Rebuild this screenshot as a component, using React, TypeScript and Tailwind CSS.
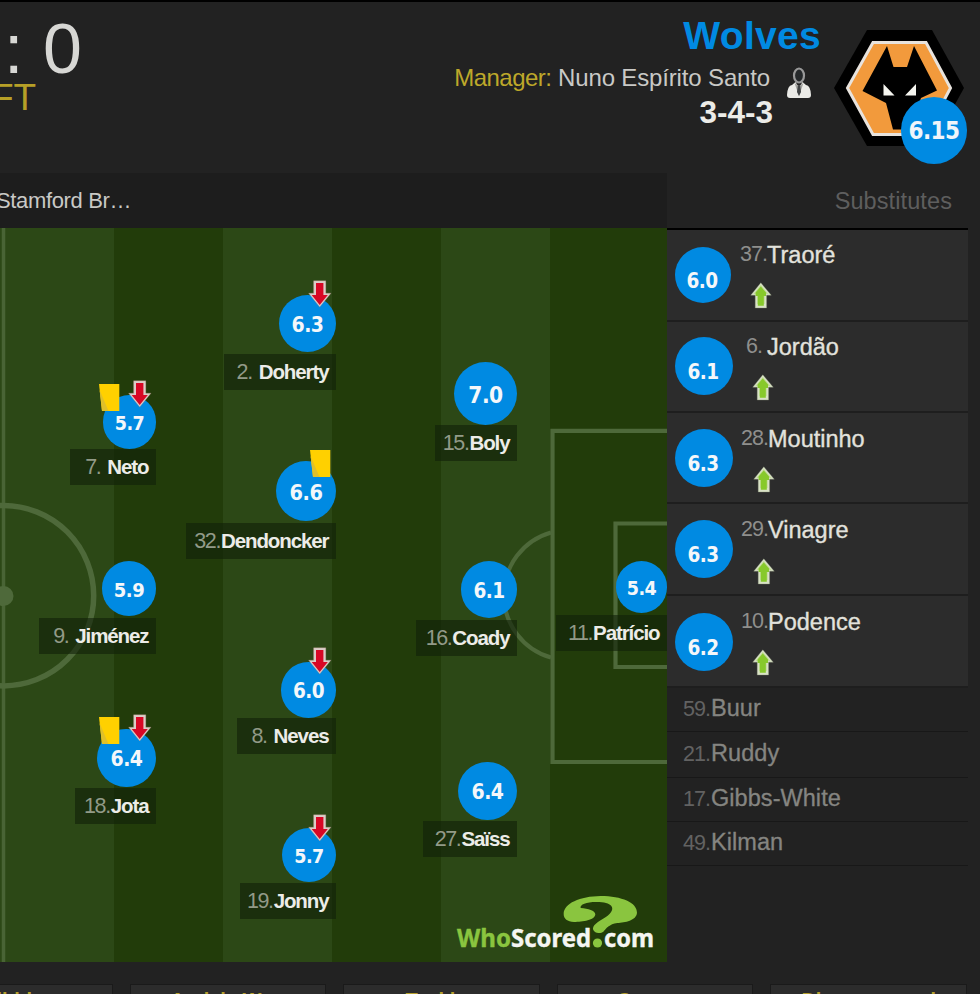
type Player = {
  number: string;
  name: string;
  rating: string;
  right: number;
  circleTop: number;
  circle: [number, number];
  labelTop: number;
  labelWidth: number;
  size: number;
  off?: [number, number];
  card?: [number, number];
};

const PITCH_TOP = 228;
const PITCH_WIDTH = 667;

const players: Player[] = [
  { number: "2.", name: "Doherty", rating: "6.3", right: 336, circleTop: 295, circle: [57, 57], labelTop: 354, labelWidth: 112, size: 21, off: [308, 280] },
  { number: "7.", name: "Neto", rating: "5.7", right: 156, circleTop: 395, circle: [53, 54], labelTop: 449, labelWidth: 86, size: 19.5, off: [128, 380], card: [98, 383] },
  { number: "32.", name: "Dendoncker", rating: "6.6", right: 336, circleTop: 461, circle: [60, 60], labelTop: 523, labelWidth: 150, size: 21.5, card: [309, 449] },
  { number: "9.", name: "Jiménez", rating: "5.9", right: 156, circleTop: 561, circle: [54, 55], labelTop: 618, labelWidth: 117, size: 20 },
  { number: "8.", name: "Neves", rating: "6.0", right: 336, circleTop: 662, circle: [55, 56], labelTop: 718, labelWidth: 99, size: 20.5, off: [308, 647] },
  { number: "18.", name: "Jota", rating: "6.4", right: 156, circleTop: 729, circle: [59, 58], labelTop: 788, labelWidth: 81, size: 21, off: [128, 714], card: [98, 716] },
  { number: "19.", name: "Jonny", rating: "5.7", right: 336, circleTop: 828, circle: [54, 54], labelTop: 883, labelWidth: 96, size: 19.5, off: [308, 814] },
  { number: "15.", name: "Boly", rating: "7.0", right: 517, circleTop: 362, circle: [63, 63], labelTop: 425, labelWidth: 82, size: 22.5 },
  { number: "16.", name: "Coady", rating: "6.1", right: 517, circleTop: 561, circle: [56, 57], labelTop: 620, labelWidth: 101, size: 20.5 },
  { number: "27.", name: "Saïss", rating: "6.4", right: 517, circleTop: 762, circle: [59, 58], labelTop: 821, labelWidth: 94, size: 21 },
  { number: "11.", name: "Patrício", rating: "5.4", right: 667, circleTop: 561, circle: [51, 52], labelTop: 615, labelWidth: 111, size: 19.5 },
];

const used = [
  { number: "37.", name: "Traoré", rating: "6.0", height: 92, size: 56, top: 17, arrow: 83, arrowGap: 12, numberEnd: 36, nameX: 36, nameTop: 8 },
  { number: "6.", name: "Jordão", rating: "6.1", height: 91, size: 58, top: 15, arrow: 85, arrowGap: 12, numberEnd: 29, nameX: 34, nameTop: 8 },
  { number: "28.", name: "Moutinho", rating: "6.3", height: 91, size: 58, top: 16, arrow: 86, arrowGap: 12, numberEnd: 35, nameX: 35, nameTop: 9 },
  { number: "29.", name: "Vinagre", rating: "6.3", height: 92, size: 58, top: 16, arrow: 86, arrowGap: 13, numberEnd: 35, nameX: 35, nameTop: 9 },
  { number: "10.", name: "Podence", rating: "6.2", height: 92, size: 58, top: 17, arrow: 85, arrowGap: 12, numberEnd: 35, nameX: 35, nameTop: 9 },
];

const unused = [
  { number: "59.", name: "Buur", height: 44 },
  { number: "21.", name: "Ruddy", height: 46 },
  { number: "17.", name: "Gibbs-White", height: 44 },
  { number: "49.", name: "Kilman", height: 44 },
];

function ArrowDown() {
  return (
    <svg width="24" height="28" viewBox="0 0 24 28">
      <path d="M5.6 .8H17.8V13.2H23L11.7 27L.6 13.2H5.6Z" fill="#dccdc8" stroke="#b08a80" strokeOpacity=".5" strokeWidth=".6" strokeLinejoin="round" />
      <path d="M8 3H15.4V15H19.8L11.7 24.9L3.7 15H8Z" fill="#d80725" />
    </svg>
  );
}

function ArrowUp() {
  return (
    <svg width="22" height="27" viewBox="0 0 22 27">
      <path d="M5.2 26V13.2H.7L10.8 .8L21.3 13.2H16.6V26Z" fill="#d9e2c6" stroke="#7d8770" strokeOpacity=".5" strokeWidth=".7" strokeLinejoin="round" />
      <path d="M3.5 12.1L10.8 3L18.4 12.1H14.6V22H7.2V12.1Z" fill="#bfdb90" />
      <path d="M7.8 23.8V14H5.6V10.4L10.8 4.6L16 10.4V14H13.8V23.8Z" fill="#87c92b" />
    </svg>
  );
}

function Card() {
  return (
    <svg width="22" height="29" viewBox="0 0 22 29">
      <path d="M1 1H21.3V28H4Z" fill="#ffd000" />
      <path d="M1.6 7L4 28H10.5Z" fill="#dfc02a" />
    </svg>
  );
}

function PlayerNode({ p }: { p: Player }) {
  return (
    <div
      className="absolute flex flex-col items-end"
      style={{ right: PITCH_WIDTH - p.right, top: p.circleTop - PITCH_TOP }}
    >
      <div
        className="flex items-center justify-center rounded-full bg-[#008ae2] pt-[3px] font-['DejaVu_Sans_Condensed','DejaVu_Sans',sans-serif] leading-none font-bold tracking-[-0.5px] text-[#f4f7fa]"
        style={{ width: p.circle[0], height: p.circle[1], fontSize: p.size, marginBottom: p.labelTop - p.circleTop - p.circle[1] }}
      >
        {p.rating}
      </div>
      <div className="flex h-9 items-center justify-end bg-[#102008]/60 pr-[7.5px] whitespace-nowrap" style={{ width: p.labelWidth }}>
        <span className={`text-[21.5px] tracking-[-1.4px] text-[#929a88] ${p.number.length === 2 ? "mr-[7px]" : "mr-[1px]"}`}>{p.number}</span>
        <span className="text-[20.5px] font-bold tracking-[-1.1px] text-[#ecece8]">{p.name}</span>
      </div>
    </div>
  );
}

function Pitch() {
  return (
    <div className="relative h-[734px] w-[667px] overflow-hidden bg-[#223c0a]">
      <svg width="667" height="734" viewBox="0 228 667 734" className="block">
        <g fill="#2c4816">
          <rect x="0" y="228" width="114" height="734" />
          <rect x="223" y="228" width="109" height="734" />
          <rect x="441" y="228" width="109" height="734" />
        </g>
        <g fill="none" stroke="#4e693a" strokeWidth="4.2">
          <path d="M3.5 228V962" strokeWidth="3.5" stroke="#496435" />
          <circle cx="3.5" cy="595.7" r="90.2" strokeWidth="5.5" />
          <circle cx="3.5" cy="596" r="10" fill="#4e693a" stroke="none" />
          <path d="M670 430.8H552.5V762H670M670 523.5H615.5V667H670" />
          <path d="M551 532.5A65 65 0 0 0 551 657.5" />
        </g>
      </svg>
      {players.map((p) => <PlayerNode key={p.name} p={p} />)}
      {players.map((p) => (
        <div key={p.name}>
          {p.card && <div className="absolute" style={{ left: p.card[0], top: p.card[1] - PITCH_TOP }}><Card /></div>}
          {p.off && <div className="absolute" style={{ left: p.off[0], top: p.off[1] - PITCH_TOP }}><ArrowDown /></div>}
        </div>
      ))}
      <svg className="absolute right-0 bottom-0" width="237" height="82" viewBox="430 880 237 82">
        <path
          transform="translate(430 880) scale(.33333)"
          d="M401 102C401 70 450 49 512 48C575 48 622 68 621 98C619 122 585 127 562 129C538 132 528 146 520 155C510 163 490 158 489 146C488 132 515 120 532 108C558 88 550 68 508 66C475 64 448 72 452 84C475 86 495 91 496 103C495 121 458 126 432 126C412 125 401 116 401 102Z"
          fill="#8ac53f"
        />
        <circle cx="597.5" cy="943" r="4.6" fill="#8ac53f" />
        <g fontFamily="'Noto Sans', sans-serif" fontSize="25" fontWeight="700" strokeWidth=".4">
          <text x="457" y="947" textLength="54" lengthAdjust="spacingAndGlyphs" fill="#8ac53f" stroke="#8ac53f">Who</text>
          <text x="511" y="947" textLength="80" lengthAdjust="spacingAndGlyphs" fill="#f5f6f2" stroke="#f5f6f2">Scored</text>
          <text x="604" y="947" textLength="50" lengthAdjust="spacingAndGlyphs" fill="#f5f6f2" stroke="#f5f6f2">com</text>
        </g>
      </svg>
    </div>
  );
}

function Crest() {
  return (
    <svg width="132" height="120" viewBox="0 0 132 120">
      <path d="M34 2H99L131 60L99 118H34L1 60Z" fill="#000" />
      <path d="M40 14.5H93L117.5 60L93 106.5H40L14.5 60Z" fill="#f29a3c" stroke="#e8e3dd" strokeWidth="3" />
      <path d="M54 18L60.5 39H74L81 18L104 62.5L88 70L78 101.5H60L53 75L29.5 63Z" fill="#000" />
      <path d="M50.5 56L61.5 67.5H50.5ZM83 56L72 67.5H83Z" fill="#f5f5ef" />
    </svg>
  );
}

function ManagerIcon() {
  return (
    <svg width="26" height="32" viewBox="0 0 26 32">
      <ellipse cx="13" cy="8.5" rx="5" ry="7" fill="#25282a" stroke="#999" strokeWidth="2.2" />
      <path d="M9.5 15L6 18Q1.5 18.5 1 28Q1 31 4 31H22Q25 31 25 28Q24.5 18.5 20 18L16.5 15L13 21Z" fill="#ebebe7" />
      <path d="M8.5 16L13 29L17.5 16L13 19Z" fill="#a2a29f" />
      <path d="M11.8 19H14.2L15 25L13 29L11 25Z" fill="#404344" />
    </svg>
  );
}

function Header() {
  return (
    <header className="flex h-[171px] justify-between">
      <div className="w-[100px] pt-[7px] whitespace-nowrap">
        <div className="h-[71px] pl-[4px] text-[70px] leading-[80px] text-[#d7d7d4]">: 0</div>
        <div className="-ml-[9px] text-[37px] leading-[36px] text-[#b7a027]">FT</div>
      </div>
      <div className="flex">
        <div className="flex w-[400px] flex-col items-end">
          <h1 className="mt-[12px] mr-[12px] text-[39px] leading-[44px] font-bold tracking-[0.3px] text-[#008ae2]">Wolves</h1>
          <div className="mt-[3px] mr-[21px] flex h-[34px] items-center">
            <p className="text-[24px] tracking-[-0.15px] whitespace-nowrap text-[#c9c9c6]">
              <span className="tracking-[-0.5px] text-[#bda82a]">Manager:</span> Nuno Espírito Santo
            </p>
            <div className="mt-[9px] ml-[16px]"><ManagerIcon /></div>
          </div>
          <p className="-mt-px mr-[60px] text-[31.5px] leading-[36px] font-bold text-[#ecece8]">3-4-3</p>
        </div>
        <div className="relative mt-[26px] mr-[13px] h-[136px] w-[134px]">
          <Crest />
          <div className="absolute right-0 bottom-0 flex h-[67px] w-[66px] items-center justify-center rounded-full bg-[#008ae2] font-['DejaVu_Sans_Condensed','DejaVu_Sans',sans-serif] text-[24px] font-bold tracking-[-0.6px] text-[#f0f5fa]">6.15</div>
        </div>
      </div>
    </header>
  );
}

function Substitutes() {
  return (
    <aside className="w-[301px]">
      <div className="flex h-[57px] items-center justify-end border-b-2 border-black pt-[2px] pr-4 text-[23.5px] tracking-[0.1px] text-[#5e5e5e]">Substitutes</div>
      {used.map((s) => (
        <div key={s.name} className="flex border-b-2 border-[#1e1e1e] bg-[#2c2c2c] pl-2" style={{ height: s.height }}>
          <div
            className="flex shrink-0 items-center justify-center rounded-full bg-[#008ae2] pt-[13px] pr-[2px] font-['DejaVu_Sans_Condensed','DejaVu_Sans',sans-serif] text-[20.5px] leading-none font-bold tracking-[-0.5px] text-[#f4f7fa]"
            style={{ width: s.size, height: s.size, marginTop: s.top }}
          >
            {s.rating}
          </div>
          <div style={{ paddingTop: s.nameTop }}>
            <div className="flex h-[32px] items-baseline whitespace-nowrap">
              <span className="text-right text-[21.5px] tracking-[-1px] text-[#8f8f8d]" style={{ width: s.numberEnd, marginRight: s.nameX - s.numberEnd }}>
                <span className="relative -top-[2px]">{s.number}</span>
              </span>
              <span className="text-[23.5px] text-[#e2e2dd] [-webkit-text-stroke:0.35px_#e2e2dd]">{s.name}</span>
            </div>
            <div style={{ marginLeft: s.arrow - 8 - s.size, marginTop: s.arrowGap }}><ArrowUp /></div>
          </div>
        </div>
      ))}
      {unused.map((s) => (
        <div key={s.name} className="flex items-center border-b border-[#181818] pl-4" style={{ height: s.height }}>
          <span className="w-[28px] text-[21.5px] tracking-[-1px] text-[#626262]">{s.number}</span>
          <span className="-mt-[1px] text-[23.5px] tracking-[0.05px] text-[#858581] [-webkit-text-stroke:0.3px_#858581]">{s.name}</span>
        </div>
      ))}
    </aside>
  );
}

const tabs = ["Dribbles", "Aerials Won", "Tackles", "Corners", "Dispossessed"];

export default function App() {
  return (
    <div className="h-[994px] w-[980px] overflow-hidden border-t-2 border-black bg-[#222] font-['Liberation_Sans',Arial,sans-serif]">
      <Header />
      <main className="flex h-[789px]">
        <section className="w-[667px]">
          <div className="flex h-[55px] items-center bg-[#1d1d1d] text-[22px] tracking-[-0.35px] whitespace-nowrap text-[#c9c9c6]">
            <span className="-ml-[4px]">Stamford Br…</span>
          </div>
          <Pitch />
        </section>
        <Substitutes />
      </main>
      <nav className="-ml-[84px] flex gap-[17px] pt-[22px]">
        {tabs.map((t) => (
          <div key={t} className="flex h-[60px] w-[196.6px] shrink-0 justify-center border border-[#1a1a1a] bg-[#2c2c2c] pt-[5px] text-[20px] leading-[20px] font-bold text-[#b7a02c]">{t}</div>
        ))}
      </nav>
    </div>
  );
}
